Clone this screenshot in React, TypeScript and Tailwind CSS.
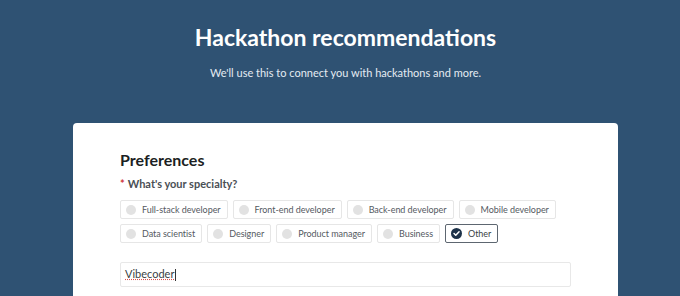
import React from "react";

const chips1 = ["Full-stack developer", "Front-end developer", "Back-end developer", "Mobile developer"];
const chips2 = ["Data scientist", "Designer", "Product manager", "Business"];

function Chip({ label }: { label: string }) {
  return (
    <div className="flex items-center h-[19px] border border-[#e6e6e6] rounded-[2px] bg-white pl-[5px] pr-[6px] gap-[6px] whitespace-nowrap">
      <span className="w-[10px] h-[10px] rounded-full bg-[#e2e2e2] shrink-0" />
      <span className="text-[9px] tracking-[-0.04px] text-[#555a5f] leading-none">{label}</span>
    </div>
  );
}

export default function App() {
  return (
    <div className="w-[680px] h-[296px] bg-[#2f5273] overflow-hidden" style={{ fontFamily: "Lato, 'Noto Sans', sans-serif" }}>
      <div className="flex flex-col items-center pt-[21px] pl-[11px]">
        <h1 className="text-[23px] font-bold text-white leading-[32px]">Hackathon recommendations</h1>
        <p className="text-[11px] text-[#e4ebf2] mt-[13px] leading-[14px]">We'll use this to connect you with hackathons and more.</p>
      </div>
      <div className="ml-[73px] mr-[62px] mt-[43px] bg-white rounded-[4px] h-[200px] pl-[47px] pr-[47px] pt-[27px]">
        <h2 className="text-[16px] font-bold text-[#1c1f23] leading-[20px]">Preferences</h2>
        <div className="mt-[7px] text-[11px] font-bold text-[#4a4f55] leading-[14px]">
          <span className="text-[#d0343a] mr-[3px]">*</span>What's your specialty?
        </div>
        <div className="mt-[9px] flex flex-col gap-[5px]">
          <div className="flex gap-[5px]">
            {chips1.map((c) => (
              <Chip key={c} label={c} />
            ))}
          </div>
          <div className="flex gap-[5px]">
            {chips2.map((c) => (
              <Chip key={c} label={c} />
            ))}
            <div className="flex items-center h-[19px] border border-[#5d6670] rounded-[2px] bg-white pl-[5px] pr-[6px] gap-[6px] whitespace-nowrap">
              <svg width="11" height="11" viewBox="0 0 12 12" className="shrink-0">
                <circle cx="6" cy="6" r="6" fill="#1d3249" />
                <path d="M3.3 6.1 L5.2 8 L8.8 4.2" stroke="white" strokeWidth="1.6" fill="none" strokeLinecap="round" strokeLinejoin="round" />
              </svg>
              <span className="text-[9px] tracking-[-0.04px] text-[#3a3f45] leading-none">Other</span>
            </div>
          </div>
        </div>
        <div className="mt-[19px] h-[25px] border border-[#e8e8e8] rounded-[2px] flex items-center px-[4px]">
          <span className="text-[11px] text-[#3a3f45] underline decoration-dotted decoration-[#d9534f]">Vibecoder</span>
          <span className="w-px h-[12px] bg-[#333] ml-[1px]" />
        </div>
      </div>
    </div>
  );
}
